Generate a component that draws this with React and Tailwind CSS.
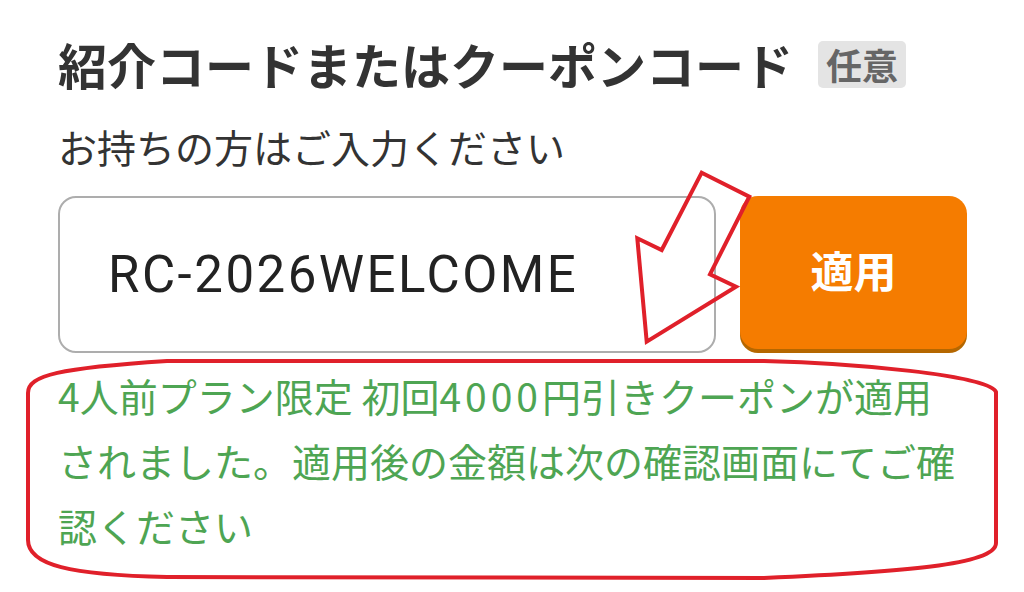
import React from "react";

export default function App() {
  return (
    <div className="relative w-[1024px] h-[592px] overflow-hidden bg-white font-['Noto_Sans_CJK_JP',sans-serif]">
      <div className="pl-[58px] pr-[57px] pt-[34px]">
        <div className="flex items-center gap-[25px]">
          <h1 className="text-[49px] font-bold leading-[60px] text-[#333333]">
            紹介コードまたはクーポンコード
          </h1>
          <span className="rounded-[5px] bg-[#e4e4e4] px-[8px] text-[36px] font-bold leading-[47px] text-[#666666]">
            任意
          </span>
        </div>
        <p className="mt-[28px] text-[39px] leading-[48px] text-[#333333]">
          お持ちの方はご入力ください
        </p>
        <div className="mt-[26px] flex gap-[24px]">
          <div className="flex h-[157px] w-[658px] items-center rounded-[18px] border-2 border-[#adadad] pl-[48px]">
            <span className="font-['Roboto',sans-serif] text-[51px] leading-none tracking-[2.5px] text-[#222222]">
              RC-2026WELCOME
            </span>
          </div>
          <button className="flex h-[153px] w-[227px] items-center justify-center rounded-[18px] bg-[#f57c00] pb-[6px] shadow-[0_4px_0_#b56700] text-[43px] font-bold text-white">
            適用
          </button>
        </div>
        <p className="mt-[10px] text-[39px] leading-[65px] text-[#4ea553]">
          4人前プラン限定 初回<span className="tracking-[4px]">4000</span>円引きクーポンが適用
          <br />
          されました。適用後の金額は次の確認画面にてご確
          <br />
          認ください
        </p>
      </div>
      <svg
        className="pointer-events-none absolute inset-0"
        width="1024"
        height="592"
        viewBox="0 0 1024 592"
        fill="none"
      >
        <polygon
          points="701.7,172.7 749.3,196.7 710,274.3 736,286.7 646.7,341.7 637.3,238.3 661.7,250"
          stroke="#e0202a"
          strokeWidth="4"
          strokeLinejoin="miter"
          fill="none"
        />
        <path
          d="M 28 393 C 28 375 60 368 167 361 L 764 361 C 850 363 990 375 996 392 L 996 543 C 996 565 900 572 764 578 L 167 577 C 70 575 28 565 28 540 Z"
          stroke="#e0202a"
          strokeWidth="4"
          fill="none"
        />
      </svg>
    </div>
  );
}
